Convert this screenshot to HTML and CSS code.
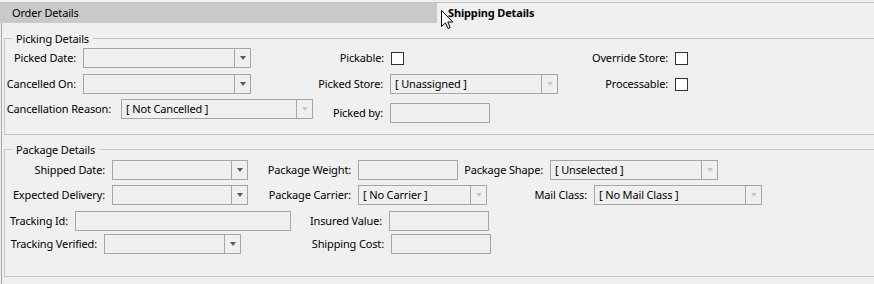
FILE: index.html
```html
<!DOCTYPE html>
<html lang="en">
<head>
  <meta charset="UTF-8">
  <title>Shipping Details</title>
  <link rel="stylesheet" href="styles.css">
</head>
<body>
  <div class="window">
    <div class="tabs">
      <div class="tab order">Order Details</div>
      <div class="tab active">Shipping Details</div>
    </div>

    <div class="page">
      <fieldset class="group picking">
        <legend>Picking Details</legend>

        <div class="row pick-1">
          <label class="lbl">Picked Date:</label>
          <div class="combo"><span class="val"></span><span class="btn"></span></div>
          <label class="lbl">Pickable:</label>
          <span class="check"></span>
          <label class="lbl">Override Store:</label>
          <span class="check"></span>
        </div>

        <div class="row pick-2">
          <label class="lbl">Cancelled On:</label>
          <div class="combo"><span class="val"></span><span class="btn"></span></div>
          <label class="lbl">Picked Store:</label>
          <div class="combo off"><span class="val">[ Unassigned ]</span><span class="btn"></span></div>
          <label class="lbl">Processable:</label>
          <span class="check"></span>
        </div>

        <div class="row pick-3">
          <label class="lbl wide">Cancellation Reason:</label>
          <div class="combo off"><span class="val">[ Not Cancelled ]</span><span class="btn"></span></div>
          <label class="lbl lower">Picked by:</label>
          <div class="text lower"></div>
        </div>
      </fieldset>

      <fieldset class="group package">
        <legend>Package Details</legend>

        <div class="row pack-1">
          <label class="lbl">Shipped Date:</label>
          <div class="combo"><span class="val"></span><span class="btn"></span></div>
          <label class="lbl">Package Weight:</label>
          <div class="text"></div>
          <label class="lbl">Package Shape:</label>
          <div class="combo off"><span class="val">[ Unselected ]</span><span class="btn"></span></div>
        </div>

        <div class="row pack-2">
          <label class="lbl">Expected Delivery:</label>
          <div class="combo"><span class="val"></span><span class="btn"></span></div>
          <label class="lbl">Package Carrier:</label>
          <div class="combo off"><span class="val">[ No Carrier ]</span><span class="btn"></span></div>
          <label class="lbl">Mail Class:</label>
          <div class="combo off"><span class="val">[ No Mail Class ]</span><span class="btn"></span></div>
        </div>

        <div class="row pack-3">
          <label class="lbl">Tracking Id:</label>
          <div class="text"></div>
          <label class="lbl">Insured Value:</label>
          <div class="text"></div>
        </div>

        <div class="row pack-4">
          <label class="lbl">Tracking Verified:</label>
          <div class="combo"><span class="val"></span><span class="btn"></span></div>
          <label class="lbl">Shipping Cost:</label>
          <div class="text"></div>
        </div>
      </fieldset>
    </div>

    <!-- mouse pointer sitting on the tab header -->
    <svg class="cursor" width="13" height="20" viewBox="0 0 13 20">
      <path d="M0.5 0.5 L0.5 16.5 L4.5 12.8 L7 18.5 L9.2 17.6 L6.8 12 L11.8 12 Z" fill="#fff" stroke="#000" stroke-width="1" stroke-linejoin="miter"/>
    </svg>
  </div>
</body>
</html>
```

FILE: styles.css
```css
body {
  margin: 0;
  padding: 0;
  background: #f0f0f0;
  font-family: "Noto Sans", "Liberation Sans", sans-serif;
  font-size: 11px;
  letter-spacing: -0.15px;
  color: #000;
  overflow: hidden;
}
.window {
  position: relative;
  width: 874px;
  height: 284px;
}
.tabs {
  display: flex;
  margin-top: 2px;
  border-top: 1px solid #c4c4c4;
  height: 20px;
}
.tab {
  height: 20px;
  line-height: 20px;
  box-sizing: border-box;
}
.tab.order {
  width: 437px;
  padding-left: 12px;
  background: #c9c9c9;
}
.tab.active {
  padding-left: 11px;
  font-weight: bold;
}
.page {
  margin-left: 1px;
  padding: 8px 0 0 2px;
  height: 261px;
  box-sizing: border-box;
  border-left: 1px solid #a8a8a8;
}
.group {
  margin: 0;
  padding: 2px 0 11px 0;
  min-width: 0;
  border: 1px solid #c6c6c6;
  border-right: none;
}
.group legend {
  margin-left: 7px;
  padding: 0 4px;
  line-height: 15px;
}
.package {
  margin-top: 7px;
  padding-top: 3px;
  padding-bottom: 22px;
}
.row {
  display: grid;
  align-items: start;
}
.lbl {
  height: 20px;
  line-height: 20px;
  text-align: right;
  padding-right: 7px;
  white-space: nowrap;
  box-sizing: border-box;
}
.lbl.wide {
  padding-right: 10px;
}
.lower {
  margin-top: 4px;
}
.combo, .text {
  display: flex;
  height: 20px;
  border: 1px solid #a6a6a6;
  box-sizing: border-box;
  background: #f0f0f0;
}
.combo .val {
  flex: 1;
  padding-left: 4px;
  line-height: 18px;
  white-space: nowrap;
}
.combo .btn {
  width: 15px;
  border-left: 1px solid #a6a6a6;
  display: flex;
  align-items: center;
  justify-content: center;
}
.combo .btn::after {
  content: "";
  width: 0;
  height: 0;
  border-left: 3.5px solid transparent;
  border-right: 3.5px solid transparent;
  border-top: 4px solid #5a5a5a;
}
.combo.off .btn::after {
  border-top-color: #c8c8c8;
}
.check {
  align-self: center;
  width: 13px;
  height: 13px;
  border: 1px solid #333;
  background: #fff;
  box-sizing: border-box;
}

/* picking rows */
.pick-1 { grid-template-columns: 78px 168px 140px 13px 271px 13px; }
.pick-2 { grid-template-columns: 78px 168px 139px 168px 117px 13px; margin-top: 6px; }
.pick-3 { grid-template-columns: 116px 192px 77px 100px; margin-top: 5px; }

/* package rows */
.pack-1 { grid-template-columns: 107px 136px 110px 100px 92px 168px; }
.pack-2 { grid-template-columns: 107px 136px 110px 129px 107px 168px; margin-top: 5px; }
.pack-3 { grid-template-columns: 70px 216px 98px 100px; margin-top: 6px; }
.pack-4 { grid-template-columns: 99px 137px 150px 100px; margin-top: 3px; }

.cursor {
  position: absolute;
  left: 441px;
  top: 8px;
}
```
